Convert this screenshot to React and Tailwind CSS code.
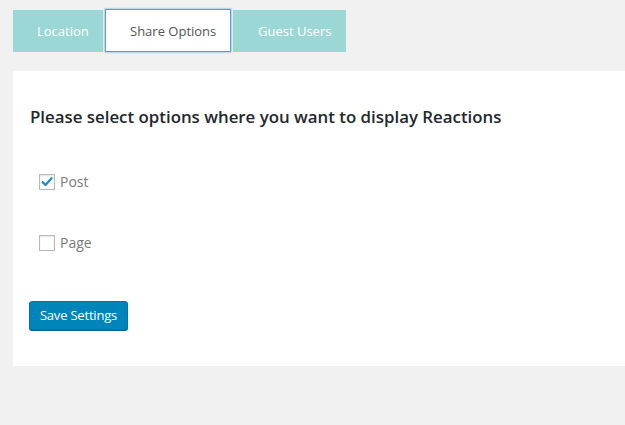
import { useState } from 'react';

const tabs = ['Location', 'Share Options', 'Guest Users'];

function Check({ checked, label, onChange }) {
  return (
    <label className="flex items-center gap-[5px] h-[16px] leading-[16px] text-[14px] text-[#7a7a7a] cursor-pointer">
      <span className="w-[16px] h-[16px] border border-[#b4b9be] bg-white shadow-[inset_0_1px_2px_rgba(0,0,0,0.1)] flex items-center justify-center">
        {checked && (
          <svg viewBox="0 0 16 16" className="w-[16px] h-[16px]">
            <path d="M3 8.2 L6.3 11.5 L13.2 3.6" fill="none" stroke="#1e8cbe" strokeWidth="2.6" strokeLinecap="round" strokeLinejoin="round" />
          </svg>
        )}
      </span>
      <input type="checkbox" className="hidden" checked={checked} onChange={onChange} />
      {label}
    </label>
  );
}

export default function App() {
  const [active, setActive] = useState('Share Options');
  const [post, setPost] = useState(true);
  const [page, setPage] = useState(false);

  return (
    <div className="min-h-screen w-full bg-[#f1f1f1] font-['Open_Sans',sans-serif] pl-[13px] pt-[9px]">
      {/* Tabs */}
      <div className="flex items-end gap-[2px] h-[43px]">
        {tabs.map((t) =>
          t === active ? (
            <button
              key={t}
              onClick={() => setActive(t)}
              className="h-[43px] w-[126px] bg-white border border-[#5b9dd9] shadow-[0_0_2px_rgba(30,140,190,0.8)] text-[13px] text-[#555] pl-[24px] pt-[2px] text-left"
            >
              {t}
            </button>
          ) : (
            <button
              key={t}
              onClick={() => setActive(t)}
              className={`h-[42px] bg-[#9bd7d5] text-[13px] text-white text-left pt-[2px] ${t === 'Location' ? 'w-[90px] pl-[24px]' : 'w-[113px] pl-[25px]'}`}
            >
              {t}
            </button>
          )
        )}
      </div>

      {/* Panel */}
      <div className="mt-[19px] bg-white h-[295px] pl-[17px] pt-[36px]">
        <h2 className="text-[16.85px] font-semibold text-[#23282d] leading-[20px]">
          Please select options where you want to display Reactions
        </h2>
        <div className="pl-[9px] mt-[47px] flex flex-col gap-[45px]">
          <Check checked={post} label="Post" onChange={() => setPost(!post)} />
          <Check checked={page} label="Page" onChange={() => setPage(!page)} />
        </div>
        <button className="mt-[50px] h-[29px] w-[99px] -ml-px bg-[#0085ba] border border-[#0073aa] rounded-[3px] shadow-[0_1px_0_#006799] text-white text-[13px] tracking-[-0.2px]">
          Save Settings
        </button>
      </div>
    </div>
  );
}
